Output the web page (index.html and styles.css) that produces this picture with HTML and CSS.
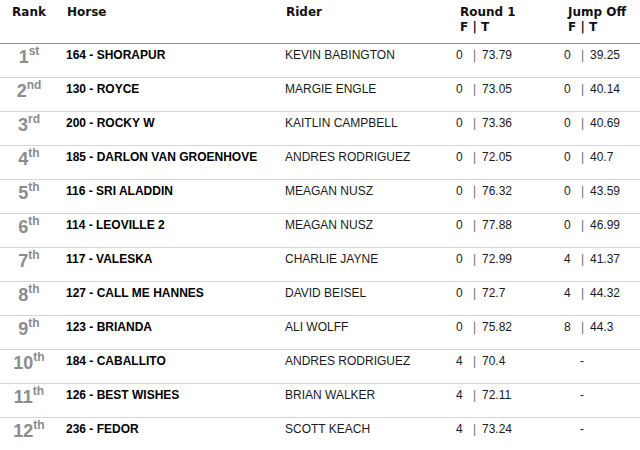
FILE: index.html
```html
<!DOCTYPE html>
<html>
<head>
<meta charset="utf-8">
<link rel="stylesheet" href="styles.css">
</head>
<body>
<div class="results">
  <div class="row head">
    <div class="c rank">Rank</div>
    <div class="c horse">Horse</div>
    <div class="c rider">Rider</div>
    <div class="c score">Round 1<br>F | T</div>
    <div class="c score">Jump Off<br>F | T</div>
  </div>

  <div class="row"><div class="c rank">1<sup>st</sup></div><div class="c horse">164 - SHORAPUR</div><div class="c rider">KEVIN BABINGTON</div><div class="c score"><span class="f">0</span><span class="bar">|</span>73.79</div><div class="c score"><span class="f">0</span><span class="bar">|</span>39.25</div></div>
  <div class="row"><div class="c rank">2<sup>nd</sup></div><div class="c horse">130 - ROYCE</div><div class="c rider">MARGIE ENGLE</div><div class="c score"><span class="f">0</span><span class="bar">|</span>73.05</div><div class="c score"><span class="f">0</span><span class="bar">|</span>40.14</div></div>
  <div class="row"><div class="c rank">3<sup>rd</sup></div><div class="c horse">200 - ROCKY W</div><div class="c rider">KAITLIN CAMPBELL</div><div class="c score"><span class="f">0</span><span class="bar">|</span>73.36</div><div class="c score"><span class="f">0</span><span class="bar">|</span>40.69</div></div>
  <div class="row"><div class="c rank">4<sup>th</sup></div><div class="c horse">185 - DARLON VAN GROENHOVE</div><div class="c rider">ANDRES RODRIGUEZ</div><div class="c score"><span class="f">0</span><span class="bar">|</span>72.05</div><div class="c score"><span class="f">0</span><span class="bar">|</span>40.7</div></div>
  <div class="row"><div class="c rank">5<sup>th</sup></div><div class="c horse">116 - SRI ALADDIN</div><div class="c rider">MEAGAN NUSZ</div><div class="c score"><span class="f">0</span><span class="bar">|</span>76.32</div><div class="c score"><span class="f">0</span><span class="bar">|</span>43.59</div></div>
  <div class="row"><div class="c rank">6<sup>th</sup></div><div class="c horse">114 - LEOVILLE 2</div><div class="c rider">MEAGAN NUSZ</div><div class="c score"><span class="f">0</span><span class="bar">|</span>77.88</div><div class="c score"><span class="f">0</span><span class="bar">|</span>46.99</div></div>
  <div class="row"><div class="c rank">7<sup>th</sup></div><div class="c horse">117 - VALESKA</div><div class="c rider">CHARLIE JAYNE</div><div class="c score"><span class="f">0</span><span class="bar">|</span>72.99</div><div class="c score"><span class="f">4</span><span class="bar">|</span>41.37</div></div>
  <div class="row"><div class="c rank">8<sup>th</sup></div><div class="c horse">127 - CALL ME HANNES</div><div class="c rider">DAVID BEISEL</div><div class="c score"><span class="f">0</span><span class="bar">|</span>72.7</div><div class="c score"><span class="f">4</span><span class="bar">|</span>44.32</div></div>
  <div class="row"><div class="c rank">9<sup>th</sup></div><div class="c horse">123 - BRIANDA</div><div class="c rider">ALI WOLFF</div><div class="c score"><span class="f">0</span><span class="bar">|</span>75.82</div><div class="c score"><span class="f">8</span><span class="bar">|</span>44.3</div></div>
  <div class="row"><div class="c rank">10<sup>th</sup></div><div class="c horse">184 - CABALLITO</div><div class="c rider">ANDRES RODRIGUEZ</div><div class="c score"><span class="f">4</span><span class="bar">|</span>70.4</div><div class="c score"><span class="dash">-</span></div></div>
  <div class="row"><div class="c rank">11<sup>th</sup></div><div class="c horse">126 - BEST WISHES</div><div class="c rider">BRIAN WALKER</div><div class="c score"><span class="f">4</span><span class="bar">|</span>72.11</div><div class="c score"><span class="dash">-</span></div></div>
  <div class="row"><div class="c rank">12<sup>th</sup></div><div class="c horse">236 - FEDOR</div><div class="c rider">SCOTT KEACH</div><div class="c score"><span class="f">4</span><span class="bar">|</span>73.24</div><div class="c score"><span class="dash">-</span></div></div>
</div>
</body>
</html>
```

FILE: styles.css
```css
html, body {
  margin: 0;
  padding: 0;
  background: #fff;
}

body {
  font-family: "Liberation Sans", Arial, sans-serif;
  font-size: 12px;
  color: #1a1a1a;
}

.results {
  width: 640px;
}

.row {
  display: grid;
  grid-template-columns: 58px 227px 171px 108px 1fr;
  align-items: start;
  height: 33px;
  border-bottom: 1px solid #d4d4d4;
}

.row .c {
  padding-top: 4px;
  line-height: 15px;
}

.row .horse {
  padding-left: 8px;
  font-weight: bold;
  color: #000;
}

.row .rank {
  text-align: center;
  padding-top: 3px;
  font-size: 18px;
  line-height: 20px;
  font-weight: bold;
  color: #8c8c8c;
}

.row .rank sup {
  font-size: 12px;
  line-height: 0;
  vertical-align: 8px;
}

.score .f {
  display: inline-block;
  width: 17px;
}

.score .bar {
  display: inline-block;
  width: 9px;
  color: #5e7385;
}

.score .dash {
  padding-left: 16px;
}

.row.head {
  height: 43px;
  border-bottom: 1px solid #8f8f8f;
  font-family: "DejaVu Sans", Verdana, sans-serif;
  font-weight: bold;
  color: #111;
}

.row.head .c {
  padding-top: 5px;
  line-height: 15px;
  font-size: 12px;
  color: #111;
}

.row.head .rank {
  font-size: 12px;
  line-height: 15px;
  padding-top: 5px;
}

.row.head .horse {
  padding-left: 9px;
}

.row.head .rider {
  padding-left: 1px;
}

.row.head .score {
  padding-left: 4px;
}
```
